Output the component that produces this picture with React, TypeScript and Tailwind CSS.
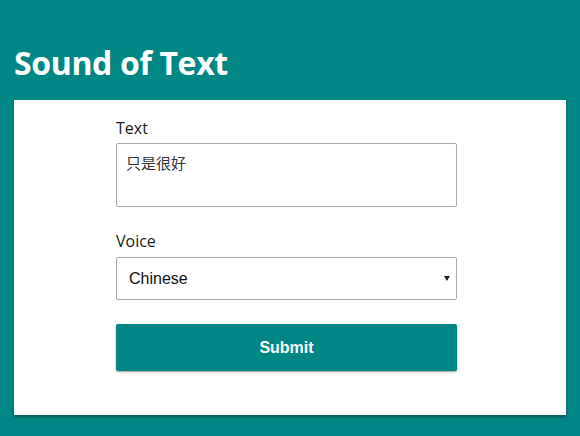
import { useState } from 'react';

export default function App() {
  const [text, setText] = useState('只是很好');
  const [voice, setVoice] = useState('zh-CN');

  return (
    <div className="min-h-[436px] bg-[#008785] px-[14px] pt-[39px] pb-[21px]">
      {/* Header */}
      <h1 className="h-[48px] text-[32px] leading-[48px] font-bold text-white tracking-[-0.35px] [font-family:'Open_Sans',sans-serif]">
        Sound of Text
      </h1>

      {/* Card */}
      <div className="mt-[13px] bg-white shadow-[0_2px_3px_rgba(0,0,0,0.35)] pt-[17px] pb-[44px]">
        <form className="ml-[102px] w-[341px] flex flex-col" onSubmit={(e) => e.preventDefault()}>
          <label className="text-[16px] leading-[22px] text-[#1a1a1a] [font-family:'Open_Sans',sans-serif]">Text</label>
          <textarea
            value={text}
            onChange={(e) => setText(e.target.value)}
            className="mt-[4px] h-[64px] resize-none rounded-[2px] border border-[#a9a9a9] px-[9px] py-[9px] text-[15px] leading-[22px] text-[#333] outline-none [font-family:'Liberation_Sans','Noto_Sans_CJK_SC',sans-serif]"
          />

          <label className="mt-[23px] text-[16px] leading-[23px] text-[#1a1a1a] [font-family:'Open_Sans',sans-serif]">Voice</label>
          <div className="relative mt-[4px]">
            <select
              value={voice}
              onChange={(e) => setVoice(e.target.value)}
              className="h-[43px] w-full appearance-none rounded-[2px] border border-[#a9a9a9] bg-white pl-[12px] text-[16px] text-[#111] outline-none [font-family:'Liberation_Sans',sans-serif]"
            >
              <option value="zh-CN">Chinese</option>
              <option value="en-US">English</option>
              <option value="ja">Japanese</option>
            </select>
            <svg className="pointer-events-none absolute right-[7px] top-[19px]" width="6" height="5" viewBox="0 0 6 5">
              <path d="M0 0h6L3 5z" fill="#222" />
            </svg>
          </div>

          <button
            type="submit"
            className="mt-[24px] h-[47px] rounded-[2px] bg-[#008785] text-[16px] font-bold text-white shadow-[0_1px_2px_rgba(0,0,0,0.4)] [font-family:'Liberation_Sans',sans-serif]"
          >
            Submit
          </button>
        </form>
      </div>
    </div>
  );
}
